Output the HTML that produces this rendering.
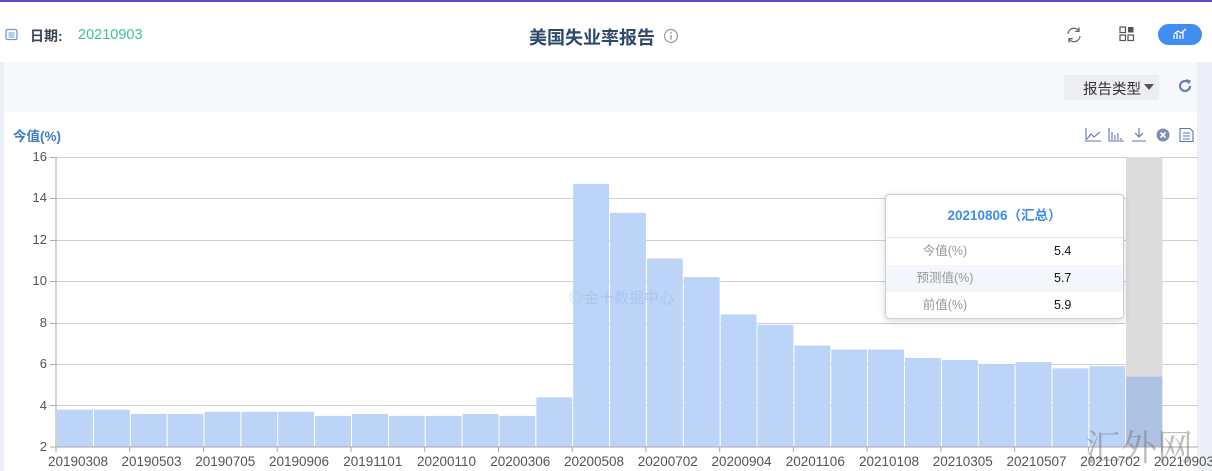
<!DOCTYPE html>
<html><head><meta charset="utf-8"><style>
body{margin:0;width:1212px;height:471px;overflow:hidden;background:#fff;font-family:"Liberation Sans","Noto Sans CJK SC",sans-serif;position:relative}
.a{position:absolute}
</style></head><body>
<div class="a" style="left:0;top:0;width:1212px;height:2px;background:#5a4fc2"></div>
<!-- header -->
<svg class="a" style="left:5px;top:28px" width="13" height="13" viewBox="0 0 13 13"><rect x="1" y="1.5" width="11" height="10" rx="1.5" fill="none" stroke="#6f97d8" stroke-width="1.3"/><path d="M3.5 5h6M3.5 7h6M3.5 9h6" stroke="#6f97d8" stroke-width="1"/></svg>
<div class="a" style="left:30px;top:26px;font-size:14px;font-weight:bold;color:#3b4557">日期:</div>
<div class="a" style="left:78px;top:27px;font-size:14.5px;color:#3fc48e">20210903</div>
<div class="a" style="left:529px;top:24px;font-size:18px;font-weight:bold;color:#2e4a6b">美国失业率报告</div>
<svg class="a" style="left:663px;top:28px" width="16" height="16"><circle cx="8" cy="8" r="6.5" fill="none" stroke="#999" stroke-width="1.2"/><path d="M8 7v4.5" stroke="#999" stroke-width="1.4"/><circle cx="8" cy="5" r="0.9" fill="#999"/></svg>
<svg class="a" style="left:1065px;top:26px" width="18" height="18" viewBox="0 0 18 18"><path d="M3 8a6 6 0 0 1 11-3M15 10a6 6 0 0 1-11 3" fill="none" stroke="#666" stroke-width="1.3"/><path d="M14 1.5v3.8h-3.8M4 16.5v-3.8h3.8" fill="none" stroke="#666" stroke-width="1.3"/></svg>
<svg class="a" style="left:1119px;top:26px" width="16" height="16"><rect x="1" y="1" width="5.5" height="5.5" fill="none" stroke="#555" stroke-width="1.2"/><rect x="9" y="1" width="5.5" height="5.5" fill="#555"/><rect x="1" y="9" width="5.5" height="5.5" fill="none" stroke="#555" stroke-width="1.2"/><rect x="9" y="9" width="5.5" height="5.5" fill="none" stroke="#555" stroke-width="1.2"/></svg>
<div class="a" style="left:1158px;top:24px;width:44px;height:21px;border-radius:11px;background:#3f8ef0"></div>
<svg class="a" style="left:1172px;top:27px" width="16" height="14"><path d="M2 12V8M5 12V6M8 12V8M11 12V5M2 7l4-3 3 2 5-4" fill="none" stroke="#fff" stroke-width="1.3"/></svg>
<!-- panels -->
<div class="a" style="left:0;top:62px;width:4px;height:409px;background:#eceff8"></div>
<div class="a" style="left:1197px;top:62px;width:15px;height:409px;background:#eceff8"></div>
<div class="a" style="left:4px;top:62px;width:1193px;height:50px;background:#f7f8fb"></div>
<div class="a" style="left:1064px;top:75px;width:95px;height:25px;background:#eceef3"></div>
<div class="a" style="left:1083px;top:78px;font-size:14.5px;color:#333">报告类型</div>
<svg class="a" style="left:1144px;top:84px" width="10" height="6"><path d="M0 0h10L5 6z" fill="#555"/></svg>
<svg class="a" style="left:1177px;top:78px" width="16" height="16" viewBox="0 0 16 16"><path d="M13 8a5 5 0 1 1-2-4" fill="none" stroke="#6c80b0" stroke-width="2.2"/><path d="M9 1l5 1.5-2 4z" fill="#6c80b0"/></svg>
<div class="a" style="left:13px;top:125px;font-size:13.5px;font-weight:bold;color:#3d7ec9">今值(%)</div>
<!-- chart tools -->
<svg class="a" style="left:1085px;top:127px" width="112" height="16" viewBox="0 0 112 16" fill="none" stroke="#5b74b8" stroke-width="1.1">
<path d="M1 1v13h15M2 12l4-5 3 3 6-5"/>
<path d="M24 1v13h15M27 13V5M30 13V8M33 13V6M36 13v-2"/>
<path d="M54 1v9M50 6l4 4 4-4M47 14h14"/>
<circle cx="78" cy="8" r="6.5" fill="#7e8fb6" stroke="none"/><path d="M75.5 5.5l5 5M80.5 5.5l-5 5" stroke="#fff" stroke-width="1.6"/>
<path d="M95 1.5h10l3 3v10h-13zM98 6h7M98 9h7M98 12h7"/>
</svg>
<!-- chart -->
<svg class="a" style="left:0;top:0" width="1212" height="471" font-family="Liberation Sans, sans-serif">
<g stroke="#cfcfcf" stroke-width="1">
<path d="M56 157.5H1198M56 198.5H1198M56 240.5H1198M56 281.5H1198M56 323.5H1198M56 364.5H1198M56 405.5H1198"/>
</g>
<rect x="1126" y="157" width="36.5" height="290" fill="#dcdcdc"/>
<g fill="#bcd4f8">
<rect x="57" y="409.7" width="35.9" height="37.3"/>
<rect x="93.9" y="409.7" width="35.9" height="37.3"/>
<rect x="130.7" y="413.9" width="35.9" height="33.1"/>
<rect x="167.6" y="413.9" width="35.9" height="33.1"/>
<rect x="204.5" y="411.8" width="35.9" height="35.2"/>
<rect x="241.4" y="411.8" width="35.9" height="35.2"/>
<rect x="278.2" y="411.8" width="35.9" height="35.2"/>
<rect x="315.1" y="415.9" width="35.9" height="31.1"/>
<rect x="352" y="413.9" width="35.9" height="33.1"/>
<rect x="388.8" y="415.9" width="35.9" height="31.1"/>
<rect x="425.7" y="415.9" width="35.9" height="31.1"/>
<rect x="462.6" y="413.9" width="35.9" height="33.1"/>
<rect x="499.4" y="415.9" width="35.9" height="31.1"/>
<rect x="536.3" y="397.3" width="35.9" height="49.7"/>
<rect x="573.2" y="183.9" width="35.9" height="263.1"/>
<rect x="610" y="212.9" width="35.9" height="234.1"/>
<rect x="646.9" y="258.5" width="35.9" height="188.5"/>
<rect x="683.8" y="277.1" width="35.9" height="169.9"/>
<rect x="720.7" y="314.4" width="35.9" height="132.6"/>
<rect x="757.5" y="324.8" width="35.9" height="122.2"/>
<rect x="794.4" y="345.5" width="35.9" height="101.5"/>
<rect x="831.3" y="349.6" width="35.9" height="97.4"/>
<rect x="868.1" y="349.6" width="35.9" height="97.4"/>
<rect x="905" y="357.9" width="35.9" height="89.1"/>
<rect x="941.9" y="360" width="35.9" height="87"/>
<rect x="978.7" y="364.1" width="35.9" height="82.9"/>
<rect x="1015.6" y="362.1" width="35.9" height="84.9"/>
<rect x="1052.5" y="368.3" width="35.9" height="78.7"/>
<rect x="1089.4" y="366.2" width="35.9" height="80.8"/>
</g>
<rect x="1126.2" y="376.6" width="36" height="70.4" fill="#aec3e3"/>
<path d="M56 157V447H1198" stroke="#aaa" fill="none"/>
<g stroke="#aaa"><path d="M50 157.5h6M50 198.5h6M50 240.5h6M50 281.5h6M50 323.5h6M50 364.5h6M50 405.5h6M50 447h6"/>
<path d="M56 447v5M129.7 447v5M203.5 447v5M277.2 447v5M351 447v5M424.7 447v5M498.4 447v5M572.2 447v5M645.9 447v5M719.7 447v5M793.4 447v5M867.1 447v5M940.9 447v5M1014.6 447v5M1088.4 447v5M1162 447v5"/></g>
<g font-size="13" fill="#555" text-anchor="end">
<text x="47" y="161">16</text><text x="47" y="202">14</text><text x="47" y="244">12</text><text x="47" y="285">10</text><text x="47" y="327">8</text><text x="47" y="368">6</text><text x="47" y="410">4</text><text x="47" y="451">2</text></g>
<g font-size="13.5" fill="#555" text-anchor="middle">
<text x="78" y="466">20190308</text><text x="151.5" y="466">20190503</text><text x="225.3" y="466">20190705</text><text x="299" y="466">20190906</text><text x="372.8" y="466">20191101</text><text x="446.5" y="466">20200110</text><text x="520.3" y="466">20200306</text><text x="594" y="466">20200508</text><text x="667.8" y="466">20200702</text><text x="741.5" y="466">20200904</text><text x="815.3" y="466">20201106</text><text x="889" y="466">20210108</text><text x="962.8" y="466">20210305</text><text x="1036.5" y="466">20210507</text><text x="1110.3" y="466">20210702</text><text x="1184" y="466">20210903</text></g>
<text x="569" y="303" font-size="15" fill="#a8c2ec" fill-opacity="0.8" font-family="Noto Sans CJK SC, sans-serif">◎金十数据中心</text>
<text x="1085" y="460" font-size="36" fill="rgba(110,110,110,0.45)" font-family="Noto Serif CJK SC, serif">汇外网</text>
</svg>
<!-- tooltip -->
<div class="a" style="left:885px;top:194px;width:237px;height:123px;background:#fff;border:1px solid #ccd;border-radius:4px;box-shadow:0 2px 8px rgba(0,0,0,0.15);overflow:hidden">
<div style="height:42px;line-height:42px;text-align:center;font-size:13.5px;font-weight:bold;color:#3d8ee8;border-bottom:1px solid #e4e4e4">20210806（汇总）</div>
<div style="height:27px;line-height:27px;font-size:12.5px;position:relative"><span class="a" style="left:0;width:118px;text-align:center;color:#999">今值(%)</span><span class="a" style="left:168px;color:#111">5.4</span></div>
<div style="height:27px;line-height:27px;font-size:12.5px;position:relative;background:#f3f6fa"><span class="a" style="left:0;width:118px;text-align:center;color:#999">预测值(%)</span><span class="a" style="left:168px;color:#111">5.7</span></div>
<div style="height:27px;line-height:27px;font-size:12.5px;position:relative"><span class="a" style="left:0;width:118px;text-align:center;color:#999">前值(%)</span><span class="a" style="left:168px;color:#111">5.9</span></div>
</div>
</body></html>
